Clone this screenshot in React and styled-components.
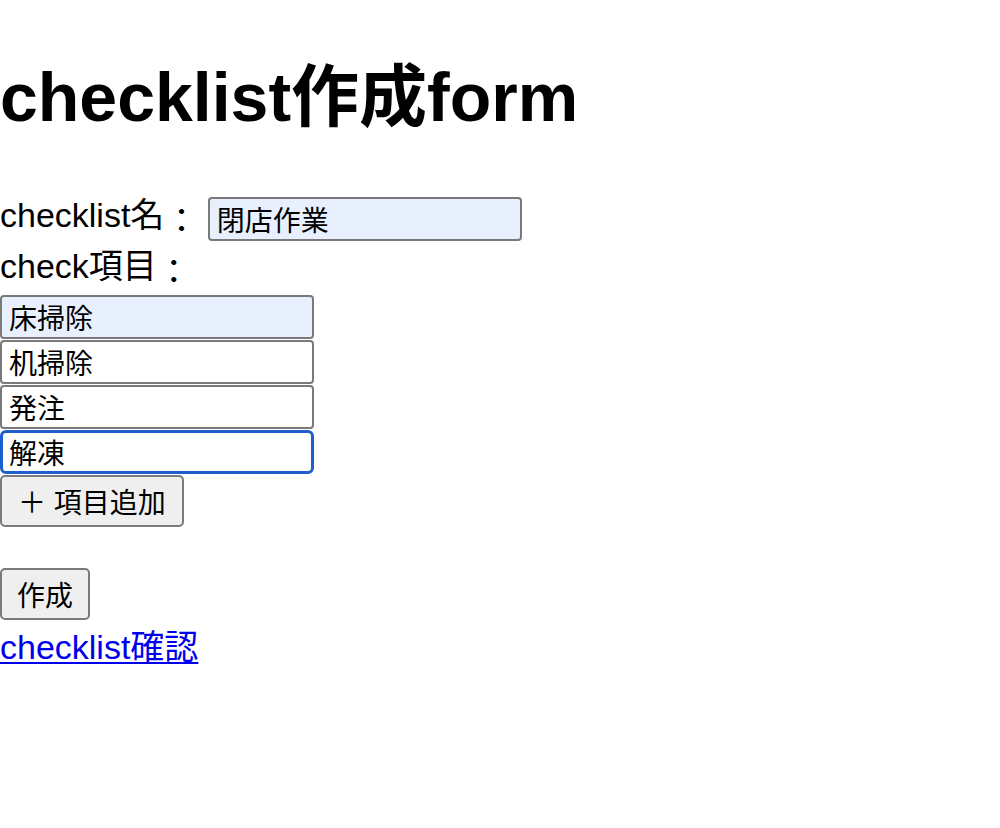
import React from "react";
import styled, { createGlobalStyle } from "styled-components";

const Global = createGlobalStyle`
  html, body { margin: 0; padding: 0; background: #fff; }
  body {
    font-family: "Liberation Sans", "Noto Sans CJK JP", sans-serif;
    font-size: 34px;
    color: #000;
  }
`;

const Page = styled.div`
  display: flex;
  flex-direction: column;
  align-items: flex-start;
`;

const Title = styled.h1`
  margin: 57px 0 0;
  font-size: 68px;
  font-weight: 700;
  line-height: 80px;
  height: 80px;
  white-space: nowrap;
`;

const Form = styled.form`
  display: flex;
  flex-direction: column;
  align-items: flex-start;
  margin-top: 60px;
`;

const Row = styled.div`
  display: flex;
  align-items: flex-start;
  height: 44px;
`;

const Label = styled.span`
  display: block;
  line-height: 37px;
  height: 37px;
  white-space: pre;
  margin-top: ${(p) => p.$top || 0}px;
`;

const Colon = styled.span`
  vertical-align: -6px;
`;

const TextInput = styled.input`
  box-sizing: border-box;
  width: 314px;
  height: 44px;
  margin: 0;
  padding: 0 6px;
  border: ${(p) => (p.$focus ? "3px solid #1e5fcf" : "2px solid #7a7a7a")};
  border-radius: ${(p) => (p.$focus ? "6px" : "4px")};
  background: ${(p) => (p.$auto ? "#e8f0fe" : "#fff")};
  font-family: "Liberation Sans", "Noto Sans CJK JP", sans-serif;
  font-size: 28px;
  color: #000;
  outline: none;
  padding-left: ${(p) => (p.$focus ? 6 : 7)}px;
`;

const Items = styled.div`
  display: flex;
  flex-direction: column;
  gap: 1px;
  margin-top: 10px;
`;

const Button = styled.button`
  box-sizing: border-box;
  height: 52px;
  margin-top: ${(p) => p.$top || 0}px;
  padding: 0 ${(p) => p.$pad || 14}px;
  border: 2px solid #7a7a7a;
  border-radius: 5px;
  background: #efefef;
  font-family: "Liberation Sans", "Noto Sans CJK JP", sans-serif;
  font-size: 28px;
  color: #000;
  white-space: pre;
`;

const Link = styled.a`
  display: block;
  margin-top: 9px;
  line-height: 37px;
  color: #0000ee;
  text-decoration: underline;
  text-decoration-thickness: 2px;
  text-underline-offset: 3px;
`;

export default function App() {
  const items = [
    { v: "床掃除", auto: true },
    { v: "机掃除" },
    { v: "発注" },
    { v: "解凍", focus: true },
  ];
  return (
    <Page>
      <Global />
      <Title>checklist作成form</Title>
      <Form onSubmit={(e) => e.preventDefault()}>
        <Row>
          <Label>
            checklist名<Colon>：</Colon>{" "}
          </Label>
          <TextInput $auto defaultValue="閉店作業" />
        </Row>
        <Label $top={7}>
          check項目<Colon>：</Colon>
        </Label>
        <Items>
          {items.map((it) => (
            <TextInput
              key={it.v}
              $auto={it.auto}
              $focus={it.focus}
              defaultValue={it.v}
            />
          ))}
        </Items>
        <Button type="button" $top={1} $pad={16}>＋ 項目追加</Button>
        <Button type="submit" $top={41} $pad={15}>作成</Button>
      </Form>
      <Link href="#">checklist確認</Link>
    </Page>
  );
}
